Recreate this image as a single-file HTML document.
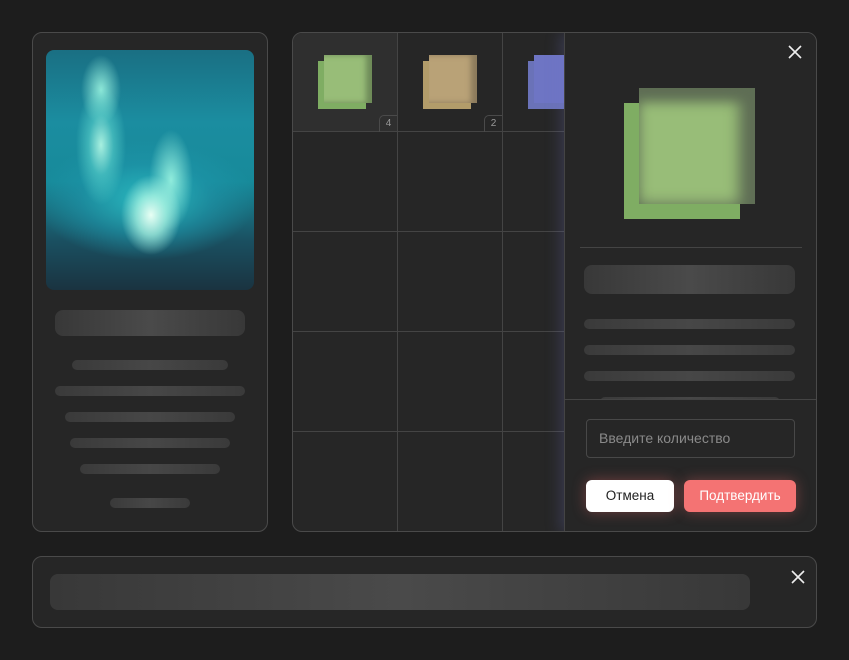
<!DOCTYPE html>
<html><head><style>
body{margin:0;width:849px;height:660px;background:#1d1d1d;position:relative;overflow:hidden;font-family:"Liberation Sans",sans-serif}
.p{position:absolute;background:#262626;border:1px solid #4a4a4a;border-radius:10px;box-sizing:border-box}
.bar{position:absolute;border-radius:5px;background:linear-gradient(90deg,#3a3a3a,#474747,#3a3a3a)}
.sk{position:absolute;border-radius:8px;background:linear-gradient(90deg,#383838,#4a4a4a,#383838)}
.vl{position:absolute;top:0;bottom:0;width:1px;background:#444}
.hl{position:absolute;left:0;right:0;height:1px;background:#444}
.sq{position:absolute}
.badge{position:absolute;width:17px;height:16px;border:1px solid #4a4a4a;border-right:none;border-bottom:none;border-radius:5px 0 0 0;color:#999;font-size:10px;text-align:center;line-height:16px}
</style></head><body>
<div class="p" style="left:32px;top:32px;width:236px;height:500px">
 <div style="position:absolute;left:13px;top:17px;width:208px;height:240px;border-radius:8px;overflow:hidden;background:
 radial-gradient(ellipse 30px 40px at 105px 165px,#e8fff4 0%,rgba(180,250,230,.7) 50%,rgba(0,0,0,0) 100%),
 radial-gradient(ellipse 25px 60px at 55px 95px,#a8f0e0 0%,rgba(100,220,210,.5) 50%,rgba(0,0,0,0) 100%),
 radial-gradient(ellipse 22px 50px at 125px 130px,#90ecdc 0%,rgba(0,0,0,0) 100%),
 radial-gradient(ellipse 20px 35px at 55px 40px,#8fe8d8 0%,rgba(0,0,0,0) 100%),
 radial-gradient(ellipse 110px 60px at 100px 150px,#2ab8bf 0%,rgba(30,150,170,.6) 60%,rgba(0,0,0,0) 100%),
 linear-gradient(180deg,#1a6f83 0%,#1b8da0 30%,#178a9a 55%,#1a4f60 80%,#1a3340 100%)">
 </div>
 <div class="sk" style="left:22px;top:277px;width:190px;height:26px"></div>
 <div class="bar" style="left:39px;top:327px;width:156px;height:10px"></div>
 <div class="bar" style="left:22px;top:353px;width:190px;height:10px"></div>
 <div class="bar" style="left:32px;top:379px;width:170px;height:10px"></div>
 <div class="bar" style="left:37px;top:405px;width:160px;height:10px"></div>
 <div class="bar" style="left:47px;top:431px;width:140px;height:10px"></div>
 <div class="bar" style="left:77px;top:465px;width:80px;height:10px"></div>
</div>
<div class="p" style="left:292px;top:32px;width:525px;height:500px;overflow:hidden">
 <div style="position:absolute;left:0;top:0;width:105px;height:99px;background:#2f2f2f"></div>
 <div class="vl" style="left:104px"></div><div class="vl" style="left:209px"></div><div class="vl" style="left:314px"></div><div class="vl" style="left:419px"></div>
 <div class="hl" style="top:98px"></div><div class="hl" style="top:198px"></div><div class="hl" style="top:298px"></div><div class="hl" style="top:398px"></div>
 <div class="sq" style="left:25px;top:28px;width:48px;height:48px;background:#7fad63"></div>
 <div class="sq" style="left:31px;top:22px;width:48px;height:48px;background:#98bd78;box-shadow:inset -6px 0 6px #6d8a58"></div>
 <div class="badge" style="left:86px;top:82px">4</div>
 <div class="sq" style="left:130px;top:28px;width:48px;height:48px;background:#b29c6a"></div>
 <div class="sq" style="left:136px;top:22px;width:48px;height:48px;background:#b9a277;box-shadow:inset -6px 0 6px #8b7a5c"></div>
 <div class="badge" style="left:191px;top:82px">2</div>
 <div class="sq" style="left:235px;top:28px;width:48px;height:48px;background:#6a72b8"></div>
 <div class="sq" style="left:241px;top:22px;width:48px;height:48px;background:#6e75c4"></div>
 <div style="position:absolute;left:271px;top:0;width:254px;height:500px;background:#262626;border-left:1px solid #444;box-shadow:-4px 0 14px rgba(110,115,200,.25)">
  <svg style="position:absolute;left:223px;top:12px" width="14" height="14"><path d="M1 1L13 13M13 1L1 13" stroke="#eee" stroke-width="1.6"/></svg>
  <div class="sq" style="left:59px;top:70px;width:116px;height:116px;background:#7fad63"></div>
  <div class="sq" style="left:74px;top:55px;width:116px;height:116px;background:#98bd78;box-shadow:inset -16px 0 14px #5f6e55,inset 0 14px 12px #5f6e55"></div>
  <div class="hl" style="left:15px;right:17px;top:214px"></div>
  <div class="sk" style="left:19px;top:232px;width:211px;height:29px"></div>
  <div class="bar" style="left:19px;top:286px;width:211px;height:10px"></div>
  <div class="bar" style="left:19px;top:312px;width:211px;height:10px"></div>
  <div class="bar" style="left:19px;top:338px;width:211px;height:10px"></div>
  <div class="bar" style="left:35px;top:364px;width:180px;height:10px"></div>
  <div style="position:absolute;left:0;right:0;top:366px;bottom:0;background:#262626;border-top:1px solid #444"></div>
  <div style="position:absolute;left:21px;top:386px;width:209px;height:39px;border:1px solid #484848;border-radius:4px;box-sizing:border-box;color:#8a8a8a;font-size:14px;line-height:37px;padding-left:12px">Введите количество</div>
  <div style="position:absolute;left:21px;top:447px;width:88px;height:32px;background:#fff;border-radius:6px;color:#222;font-size:13.5px;text-align:center;line-height:32px;box-shadow:0 0 14px rgba(255,110,110,.35)">Отмена</div>
  <div style="position:absolute;left:119px;top:447px;width:112px;height:32px;background:#f47373;border-radius:6px;color:#fff;font-size:13.5px;text-align:center;line-height:32px;box-shadow:0 0 14px rgba(255,110,110,.35)">Подтвердить</div>
 </div>
</div>
<div class="p" style="left:32px;top:556px;width:785px;height:72px">
 <div class="sk" style="left:17px;top:17px;width:700px;height:36px"></div>
 <svg style="position:absolute;left:758px;top:13px" width="14" height="14"><path d="M1 1L13 13M13 1L1 13" stroke="#eee" stroke-width="1.6"/></svg>
</div>
</body></html>
